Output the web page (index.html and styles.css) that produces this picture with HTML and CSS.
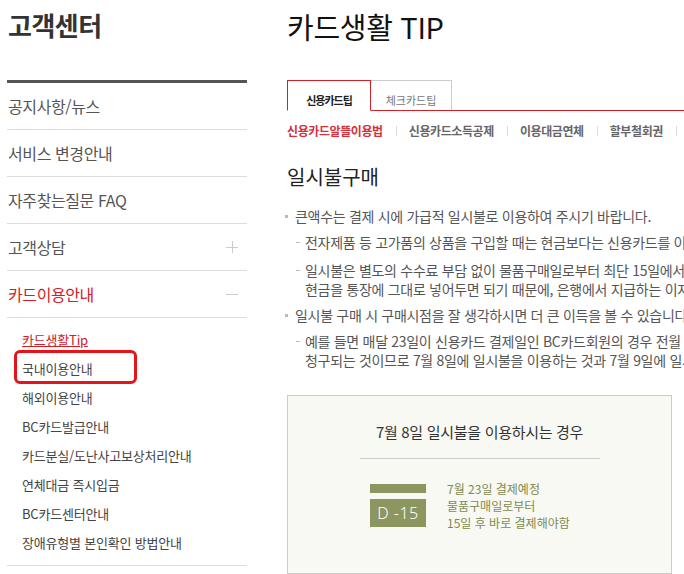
FILE: index.html
```html
<!DOCTYPE html>
<html lang="ko">
<head>
    <meta charset="UTF-8">
    <meta name="viewport" content="width=device-width, initial-scale=1.0">
    <title>고객센터 - 카드생활 TIP</title>
    <link rel="stylesheet" href="styles.css">
</head>
<body>
    <div class="wrap">
        <!-- 왼쪽 메뉴 -->
        <div class="side">
            <h1 class="side-title">고객센터</h1>
            <ul class="side-menu">
                <li><a href="#">공지사항/뉴스</a></li>
                <li><a href="#">서비스 변경안내</a></li>
                <li><a href="#">자주찾는질문 FAQ</a></li>
                <li class="fold">
                    <a href="#">고객상담</a>
                    <svg class="fold-icon" width="12" height="12" viewBox="0 0 12 12"><path d="M0 6.5H12M6.5 0V12" stroke="#ccc" stroke-width="1"/></svg>
                </li>
                <li class="fold on">
                    <a href="#">카드이용안내</a>
                    <svg class="fold-icon" width="12" height="12" viewBox="0 0 12 12"><path d="M0 6.5H12" stroke="#ccc" stroke-width="1"/></svg>
                </li>
            </ul>
            <ul class="sub-menu">
                <li class="on"><a href="#">카드생활Tip</a></li>
                <li class="mark"><a href="#">국내이용안내</a></li>
                <li><a href="#">해외이용안내</a></li>
                <li><a href="#">BC카드발급안내</a></li>
                <li><a href="#">카드분실/도난사고보상처리안내</a></li>
                <li><a href="#">연체대금 즉시입금</a></li>
                <li><a href="#">BC카드센터안내</a></li>
                <li><a href="#">장애유형별 본인확인 방법안내</a></li>
            </ul>
        </div>

        <!-- 본문 -->
        <div class="main">
            <h2 class="page-title">카드생활 TIP</h2>

            <ul class="tabs">
                <li class="on">신용카드팁</li>
                <li>체크카드팁</li>
            </ul>

            <ul class="sub-tabs">
                <li class="on">신용카드알뜰이용법</li>
                <li>신용카드소득공제</li>
                <li>이용대금연체</li>
                <li>할부철회권</li>
                <li>리볼빙서비스</li>
            </ul>

            <h3 class="sec-title">일시불구매</h3>

            <ul class="tip-list">
                <li>
                    큰액수는 결제 시에 가급적 일시불로 이용하여 주시기 바랍니다.
                    <ul class="tip-sub">
                        <li>전자제품 등 고가품의 상품을 구입할 때는 현금보다는 신용카드를 이용하는 것이 유리합니다.</li>
                        <li>일시불은 별도의 수수료 부담 없이 물품구매일로부터 최단 15일에서 최장 45일까지 결제를 미룰 수 있고<br>현금을 통장에 그대로 넣어두면 되기 때문에, 은행에서 지급하는 이자만큼 이득을 볼 수 있습니다.</li>
                    </ul>
                </li>
                <li>
                    일시불 구매 시 구매시점을 잘 생각하시면 더 큰 이득을 볼 수 있습니다.
                    <ul class="tip-sub">
                        <li>예를 들면 매달 23일이 신용카드 결제일인 BC카드회원의 경우 전월 8일부터 당월 7일까지 이용한 금액이<br>청구되는 것이므로 7월 8일에 일시불을 이용하는 것과 7월 9일에 일시불을 이용하는 것은 차이가 있습니다.</li>
                    </ul>
                </li>
            </ul>

            <div class="case-box">
                <p class="case-title">7월 8일 일시불을 이용하시는 경우</p>
                <div class="case-row">
                    <div class="d-day">
                        <span class="d-bar"></span>
                        <span class="d-num">D -15</span>
                    </div>
                    <p class="case-text">7월 23일 결제예정<br>물품구매일로부터<br>15일 후 바로 결제해야함</p>
                </div>
            </div>
        </div>
    </div>
</body>
</html>
```

FILE: styles.css
```css
/* 기본 */
body {
    margin: 0;
    padding: 0;
    background-color: #ffffff;
    font-family: "Noto Sans CJK KR", "Noto Sans", sans-serif;
    color: #555;
    overflow: hidden;
}

ul {
    list-style: none;
    margin: 0;
    padding: 0;
}

a {
    color: inherit;
    text-decoration: none;
}

.wrap {
    display: flex;
    align-items: flex-start;
}

/* 왼쪽 메뉴 */
.side {
    width: 240px;
    margin-left: 7px;
    flex-shrink: 0;
}

.side-title {
    margin: 0;
    padding: 8px 0 0 1px;
    height: 80px;
    box-sizing: border-box;
    font-size: 26px;
    line-height: 34px;
    font-weight: bold;
    color: #333;
    letter-spacing: -0.5px;
}

.side-menu {
    border-top: 3px solid #555;
}

.side-menu li {
    display: flex;
    align-items: center;
    justify-content: space-between;
    height: 46px;
    padding-left: 1px;
    padding-right: 9px;
    border-bottom: 1px solid #ddd;
    font-size: 16px;
    color: #555;
    letter-spacing: -0.4px;
}

.side-menu li.on {
    color: #d2202b; /* 빨강 */
}

.sub-menu {
    padding: 7px 0 8px 15px;
    border-bottom: 1px solid #ddd;
}

.sub-menu li {
    position: relative;
    height: 29px;
    line-height: 29px;
    font-size: 13px;
    color: #444;
    letter-spacing: -0.2px;
}

.sub-menu li.on a {
    color: #d2202b;
    text-decoration: underline;
}

/* 빨간 표시 박스 */
.sub-menu li.mark::after {
    content: "";
    position: absolute;
    left: -8px;
    top: -4px;
    width: 123px;
    height: 34px;
    box-sizing: border-box;
    border: 3px solid #e5141b;
    border-radius: 6px;
}

/* 본문 */
.main {
    width: 760px;
    margin-left: 40px;
    flex-shrink: 0;
}

.page-title {
    margin: 0;
    padding-top: 8px;
    height: 80px;
    box-sizing: border-box;
    font-size: 29px;
    line-height: 36px;
    font-weight: normal;
    color: #111;
    letter-spacing: -0.3px;
}

.tabs {
    display: flex;
    height: 30px;
    border-bottom: 1px solid #d2202b;
}

.tabs li {
    width: 81px;
    height: 30px;
    box-sizing: border-box;
    padding-top: 11px;
    border: 1px solid #ccc;
    border-left: none;
    border-bottom: none;
    text-align: center;
    font-size: 11px;
    line-height: 16px;
    color: #777;
}

.tabs li.on {
    width: 84px;
    height: 31px;
    border: 1px solid #d2202b;
    border-bottom: 1px solid #fff;
    font-weight: bold;
    color: #222;
    letter-spacing: -1px;
}

.sub-tabs {
    display: flex;
    margin-top: 10px;
    height: 20px;
    line-height: 20px;
    font-size: 12px;
    font-weight: bold;
    color: #666;
    letter-spacing: -0.4px;
}

.sub-tabs li {
    position: relative;
    padding: 0 13px;
    white-space: nowrap;
}

.sub-tabs li:first-child {
    padding-left: 0;
}

.sub-tabs li + li::before {
    content: "";
    position: absolute;
    left: 0;
    top: 5px;
    width: 1px;
    height: 10px;
    background-color: #ddd;
}

.sub-tabs li.on {
    color: #d6313a;
}

.sec-title {
    margin: 23px 0 0;
    font-size: 20px;
    line-height: 26px;
    font-weight: normal;
    color: #222;
}

/* 목록 */
.tip-list {
    margin-top: 17px;
    font-size: 14px;
    line-height: 19px;
    color: #555;
    letter-spacing: -0.3px;
    white-space: nowrap;
}

.tip-list > li {
    position: relative;
    padding-left: 8px;
}

.tip-list > li + li {
    margin-top: 7px;
}

.tip-list > li::before {
    content: "";
    position: absolute;
    left: -2px;
    top: 8px;
    width: 3px;
    height: 3px;
    background-color: #bbb;
}

.tip-sub {
    margin-top: 7px;
}

.tip-sub li {
    position: relative;
    padding-left: 10px;
}

.tip-sub li + li {
    margin-top: 9px;
}

.tip-sub li::before {
    content: "";
    position: absolute;
    left: 1px;
    top: 9px;
    width: 4px;
    height: 1px;
    background-color: #bbb;
}

/* 예시 박스 */
.case-box {
    width: 385px;
    box-sizing: border-box;
    margin-top: 25px;
    padding: 26px 0 42px;
    background-color: #f7f9f2;
    border: 1px solid #ccc;
}

.case-title {
    margin: 0;
    text-align: center;
    font-size: 15px;
    line-height: 20px;
    color: #333;
    letter-spacing: -0.3px;
}

.case-title::after {
    content: "";
    display: block;
    width: 240px;
    height: 1px;
    margin: 16px auto 0;
    background-color: #ccc;
}

.case-row {
    display: flex;
    align-items: center;
    margin-top: 21px;
    padding-left: 82px;
}

.d-day {
    display: flex;
    flex-direction: column;
    width: 56px;
}

.d-bar {
    height: 9px;
    background-color: #8c965e;
}

.d-num {
    margin-top: 6px;
    height: 28px;
    line-height: 28px;
    text-align: center;
    background-color: #8c965e;
    color: #fff;
    font-size: 16px;
    font-family: "Noto Sans", sans-serif;
    font-weight: 300;
    letter-spacing: 0.5px;
}

.case-text {
    margin: 0 0 0 21px;
    font-size: 12px;
    line-height: 17px;
    color: #7f8a4f;
}
```
